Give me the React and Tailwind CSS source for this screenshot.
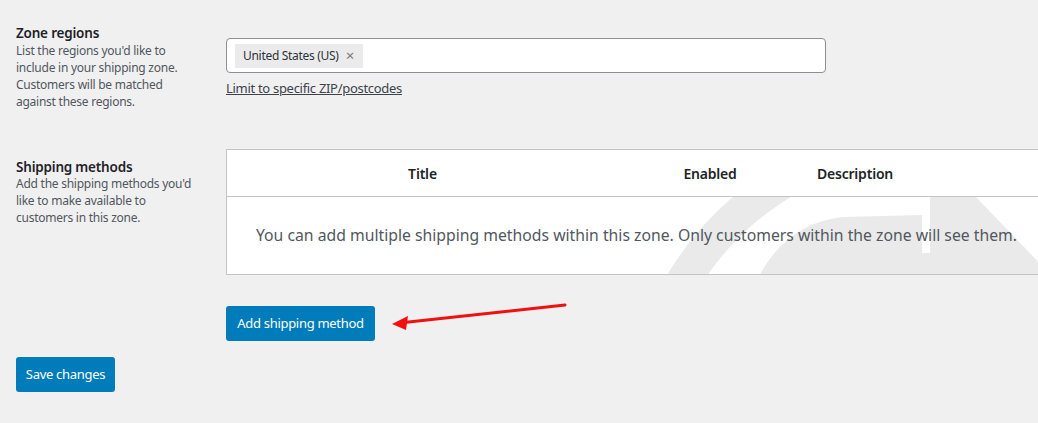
import React from 'react';

function Watermark() {
    return (
        <svg
            className="pointer-events-none absolute left-0 top-0"
            width="821"
            height="78"
            viewBox="226 197 821 78"
            aria-hidden="true"
        >
            <path
                fillRule="evenodd"
                fill="#eaeaea"
                d="M 624 430 A 306 306 0 0 1 1236 430 A 306 306 0 0 1 624 430 Z M 658 430 A 272 272 0 0 0 1202 430 A 272 272 0 0 0 658 430 Z"
            />
            <path
                fill="#eaeaea"
                d="M 758 276 C 775 245 800 222 842 217 L 921 215 L 921 253 L 929 253 L 929 197 L 975 197 L 1047 272 L 1047 276 Z"
            />
        </svg>
    );
}

function Arrow() {
    return (
        <svg className="pointer-events-none absolute left-0 top-0" width="1038" height="423" aria-hidden="true">
            <line x1="565" y1="305" x2="404" y2="322.5" stroke="#f01010" strokeWidth="3" strokeLinecap="round" />
            <path d="M 392 324 L 408 316 L 406 330 Z" fill="#f01010" />
        </svg>
    );
}

export default function App() {
    return (
        <div
            className="relative h-[423px] w-[1038px] overflow-hidden bg-[#f0f0f1] text-[#3c434a]"
            style={{ fontFamily: '"Noto Sans", "Open Sans", sans-serif' }}
        >
            <div className="grid grid-cols-[210px_1fr] pl-4 pt-[23px]">
                <div>
                    <h3 className="text-[13.5px] font-semibold leading-5 tracking-[-0.2px] text-[#1d2327]">Zone regions</h3>
                    <p className="mt-[-1px] text-[12px] leading-[17px] tracking-[-0.25px] text-[#50575e]">
                        List the regions you'd like to
                        <br />
                        include in your shipping zone.
                        <br />
                        Customers will be matched
                        <br />
                        against these regions.
                    </p>
                </div>
                <div className="pt-[15px]">
                    <div className="flex h-[35px] w-[600px] items-center rounded border border-[#8c8f94] bg-white px-2">
                        <span className="flex h-6 items-center gap-[7px] bg-[#ebebeb] pl-2 pr-[9px] text-[12px] tracking-[-0.3px] text-[#2c3338]">
                            United States (US)
                            <span className="text-[15px] leading-none text-[#787c82]">×</span>
                        </span>
                    </div>
                    <a href="#" className="mt-[7px] block text-[13px] leading-[17px] tracking-[-0.3px] text-[#3c434a] underline">
                        Limit to specific ZIP/postcodes
                    </a>
                </div>
            </div>

            <div className="mt-[39px] grid grid-cols-[210px_1fr] pl-4">
                <div className="pt-2">
                    <h3 className="text-[13.5px] font-semibold leading-5 tracking-[-0.2px] text-[#1d2327]">Shipping methods</h3>
                    <p className="mt-[-2px] text-[12px] leading-[17px] tracking-[-0.25px] text-[#50575e]">
                        Add the shipping methods you'd
                        <br />
                        like to make available to
                        <br />
                        customers in this zone.
                    </p>
                </div>
                <div>
                    <div className="w-[821px] border border-[#c3c4c7] bg-white">
                        <div className="grid h-[47px] grid-cols-[391px_184px_106px_1fr] items-center border-b border-[#c3c4c7] text-center text-[14px] font-semibold tracking-[-0.2px] text-[#1d2327]">
                            <span>Title</span>
                            <span>Enabled</span>
                            <span>Description</span>
                            <span />
                        </div>
                        <div className="relative h-[77px] overflow-hidden">
                            <Watermark />
                            <p className="relative flex h-full items-center justify-center text-[15.75px] text-[#50575e]">
                                You can add multiple shipping methods within this zone. Only customers within the zone will see them.
                            </p>
                        </div>
                    </div>
                    <button
                        type="button"
                        className="mt-[31px] h-[35px] w-[149px] rounded-[3px] bg-[#007cba] text-[13px] tracking-[-0.3px] text-white"
                    >
                        Add shipping method
                    </button>
                </div>
            </div>

            <div className="pl-4 pt-4">
                <button type="button" className="h-[35px] w-[99px] rounded-[3px] bg-[#007cba] text-[13px] tracking-[-0.3px] text-white">
                    Save changes
                </button>
            </div>

            <Arrow />
        </div>
    );
}
